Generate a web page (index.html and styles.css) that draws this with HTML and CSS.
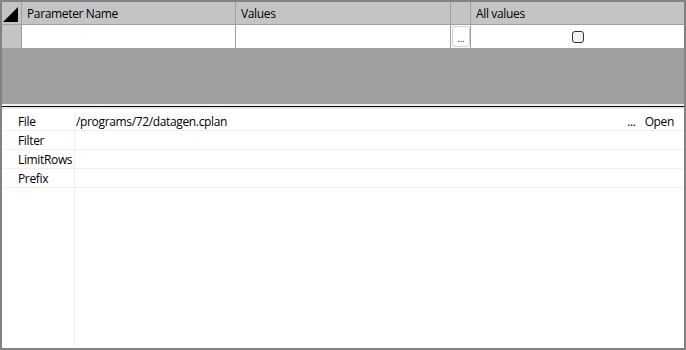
FILE: index.html
```html
<!DOCTYPE html>
<html lang="en">
<head>
  <meta charset="UTF-8" />
  <title>Parameters</title>
  <link rel="stylesheet" href="styles.css">
</head>
<body>
  <div class="frame">
    <div class="grid">
      <div class="grid-row head">
        <div class="cell rowhead"><span class="corner"></span></div>
        <div class="cell">Parameter Name</div>
        <div class="cell">Values</div>
        <div class="cell btn-col"></div>
        <div class="cell last">All values</div>
      </div>
      <div class="grid-row data">
        <div class="cell rowhead"></div>
        <div class="cell"></div>
        <div class="cell"></div>
        <div class="cell btn-col"><button class="dots">...</button></div>
        <div class="cell last center"><span class="check"></span></div>
      </div>
      <div class="grid-empty"></div>
    </div>

    <div class="splitter"></div>

    <div class="props">
      <div class="label">File</div>
      <div class="value">
        <span>/programs/72/datagen.cplan</span>
        <span class="actions"><span>...</span><span class="open">Open</span></span>
      </div>
      <div class="label">Filter</div>
      <div class="value"></div>
      <div class="label">LimitRows</div>
      <div class="value"></div>
      <div class="label">Prefix</div>
      <div class="value"></div>
      <div class="label filler"></div>
      <div class="value filler"></div>
    </div>
  </div>
</body>
</html>
```

FILE: styles.css
```css
html, body {
  margin: 0;
  padding: 0;
}

body {
  font-family: 'Open Sans', 'Noto Sans', sans-serif;
  font-size: 12px;
  letter-spacing: -0.35px;
  color: #000;
  background: #fff;
}

.frame {
  width: 686px;
  height: 350px;
  box-sizing: border-box;
  border: 2px solid #828282;
  display: flex;
  flex-direction: column;
}

/* top grid */
.grid {
  background: #a0a0a0;
  display: flex;
  flex-direction: column;
}

.grid-row {
  display: grid;
  grid-template-columns: 20px 214px 215px 20px 1fr;
  border-bottom: 1px solid #a0a0a0;
}

.grid-row.head {
  height: 22px;
  background: #c4c4c4;
}

.grid-row.data {
  height: 23px;
  background: #fff;
}

.cell {
  border-right: 1px solid #a0a0a0;
  padding-left: 5px;
  display: flex;
  align-items: center;
  box-sizing: border-box;
  white-space: nowrap;
}

.cell.last {
  border-right: none;
}

.cell.center {
  justify-content: center;
  padding-left: 0;
}

.rowhead {
  background: #c4c4c4;
  padding-left: 0;
}

.btn-col {
  padding-left: 0;
}

.corner {
  width: 0;
  height: 0;
  margin: 2px 0 0 1px;
  border-left: 15px solid transparent;
  border-bottom: 15px solid #000;
}

.dots {
  width: 18px;
  height: 21px;
  margin-left: 1px;
  padding: 0 0 3px;
  border: 1px solid #d0d0d0;
  border-radius: 3px;
  background: #fff;
  font-family: inherit;
  font-size: 9px;
  letter-spacing: 0;
  line-height: 1;
  display: flex;
  align-items: flex-end;
  justify-content: center;
  color: #000;
}

.check {
  width: 12px;
  height: 12px;
  box-sizing: border-box;
  border: 1px solid #333;
  border-radius: 3px;
  background: #f3f3f3;
  margin-left: 1px;
}

.grid-empty {
  height: 55px;
}

.splitter {
  height: 5px;
  box-sizing: border-box;
  background: #f0f0f0;
  border-top: 1px solid #f0f0f0;
  border-bottom: 2px solid #e6e6e6;
}

.splitter::before {
  content: '';
  display: block;
  height: 1px;
  margin-top: 1px;
  background: #000;
}

/* property list */
.props {
  flex: 1;
  display: grid;
  grid-template-columns: 73px 1fr;
  grid-template-rows: repeat(4, 19px) 1fr;
  padding-top: 3px;
}

.label,
.value {
  border-bottom: 1px solid #f0f0f0;
  display: flex;
  align-items: center;
  white-space: nowrap;
}

.label {
  border-right: 1px solid #f0f0f0;
  padding-left: 16px;
}

.value {
  padding-left: 1px;
  padding-right: 10px;
  justify-content: space-between;
}

.filler {
  border-bottom: none;
}

.actions {
  display: flex;
  gap: 9px;
}

.open {
  color: #000;
}
```
